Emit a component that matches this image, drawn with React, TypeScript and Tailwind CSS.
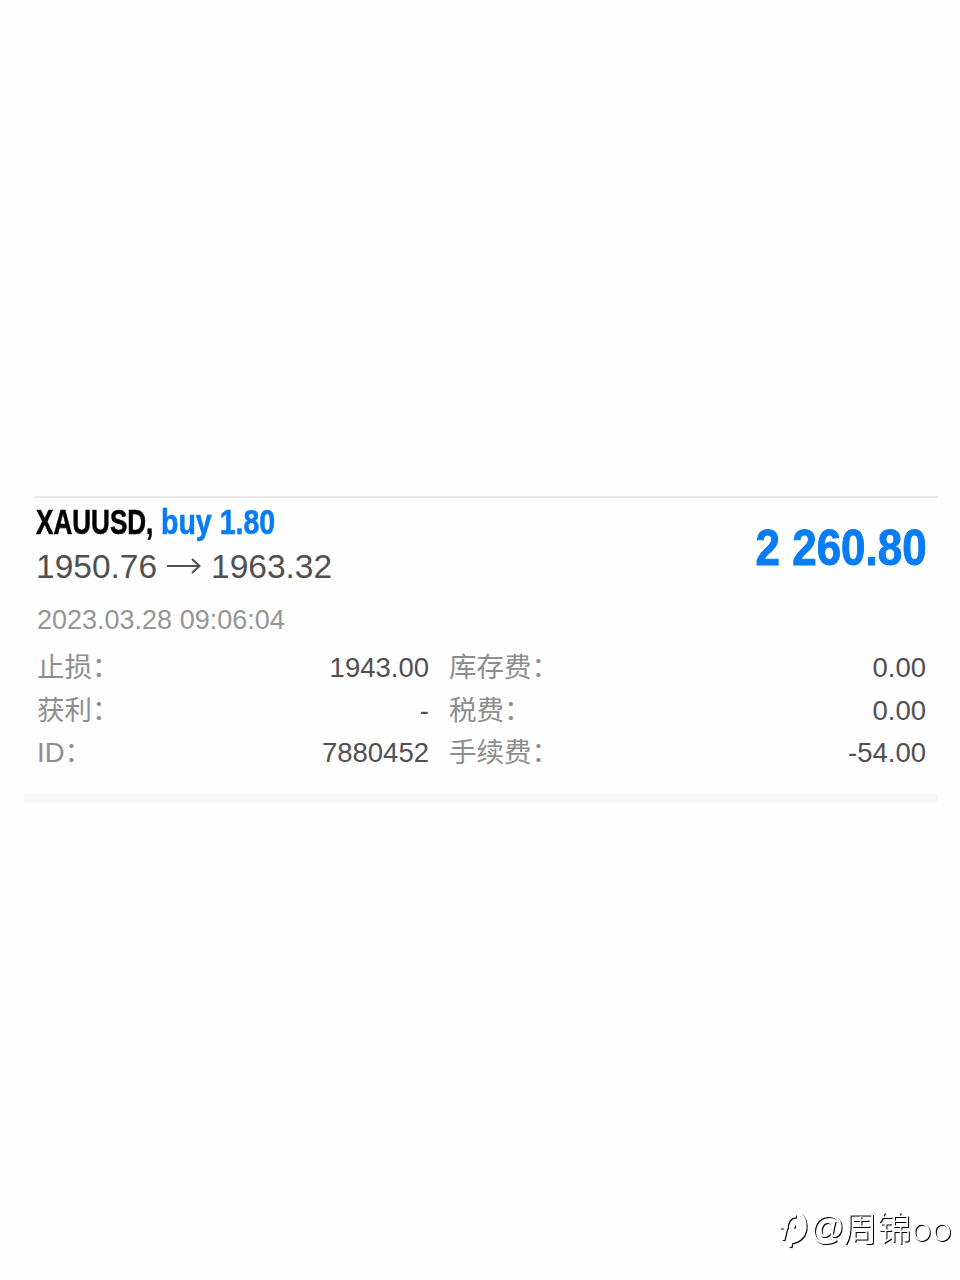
const details = [
    { label: "止损：", value: "1943.00", costLabel: "库存费：", cost: "0.00" },
    { label: "获利：", value: "-", costLabel: "税费：", cost: "0.00" },
    { label: "ID：", value: "7880452", costLabel: "手续费：", cost: "-54.00" },
];

function Watermark() {
    return (
        <footer className="mt-auto mb-[29px] flex h-[48px] items-center justify-end pr-[8px] text-white [filter:drop-shadow(1px_1px_0.4px_#000)]">
            <svg
                className="mt-[6px] mr-px"
                width="30"
                height="38"
                viewBox="0 0 30 38"
                fill="none"
                stroke="#fff"
                strokeWidth="3"
            >
                <path d="M1 16H9M4 29L8 12Q10 5 17 5M14 15H16" />
                <path d="M21 3Q27 7 26 18Q24 29 12 31L11 36" />
            </svg>
            <span className="mr-[-1px] text-[34px] leading-[48px]">@</span>
            <span className="font-['Noto_Sans_CJK_SC',sans-serif] text-[34px] leading-[48px] font-light whitespace-nowrap">
                周锦oo
            </span>
        </footer>
    );
}

export default function App() {
    return (
        <div className="flex h-[1280px] w-[960px] flex-col bg-[#fefefe] pt-[496px] font-['Liberation_Sans','Noto_Sans_CJK_SC',sans-serif]">
            <section className="mr-[22px] ml-[34px] flex h-[298px] flex-col border-t-2 border-[#e8e8e8] pr-[12px]">
                <div className="flex justify-between">
                    <div>
                        <div className="flex h-[48px] text-[35px] leading-[48px] font-bold whitespace-nowrap [-webkit-text-stroke:0.6px_currentColor]">
                            <span className="w-[127px] shrink-0 pl-[2px]">
                                <span className="inline-block origin-left scale-x-[0.745] text-black">
                                    XAUUSD,
                                </span>
                            </span>
                            <span className="inline-block origin-left scale-x-[0.815] text-[#087cf5]">
                                buy 1.80
                            </span>
                        </div>
                        <div className="flex h-[52px] text-[33.5px] leading-[42px] text-[#505053]">
                            <span className="w-[133px] pl-[2px]">1950.76</span>
                            <svg
                                className="mt-[10px] mr-[9px]"
                                width="35"
                                height="20"
                                viewBox="0 0 35 20"
                                fill="none"
                                stroke="currentColor"
                                strokeWidth="2"
                            >
                                <path d="M0 10H32M25 3L32.5 10L25 17" />
                            </svg>
                            <span>1963.32</span>
                        </div>
                    </div>
                    <div className="mt-[20px] mr-[-1px] origin-right scale-x-[0.87] text-[50.5px] leading-[60px] font-bold whitespace-nowrap text-[#087cf5] [-webkit-text-stroke:1px_currentColor]">
                        2 260.80
                    </div>
                </div>
                <div className="h-[49px] pl-[3px] text-[27px] leading-[44px] text-[#969696]">
                    2023.03.28 09:06:04
                </div>
                {details.map((row) => (
                    <div key={row.label} className="flex h-[42.5px] text-[27.5px] leading-[42px]">
                        <span className="pl-[3px] text-[#8e8e8e]">{row.label}</span>
                        <span className="ml-auto text-[#505053]">{row.value}</span>
                        <div className="ml-[20px] flex w-[477px] justify-between">
                            <span className="text-[#8e8e8e]">{row.costLabel}</span>
                            <span className="text-[#505053]">{row.cost}</span>
                        </div>
                    </div>
                ))}
            </section>
            <div className="mr-[22px] ml-[24px] h-[8px] bg-[#f7f7f7]" />
            <Watermark />
        </div>
    );
}
